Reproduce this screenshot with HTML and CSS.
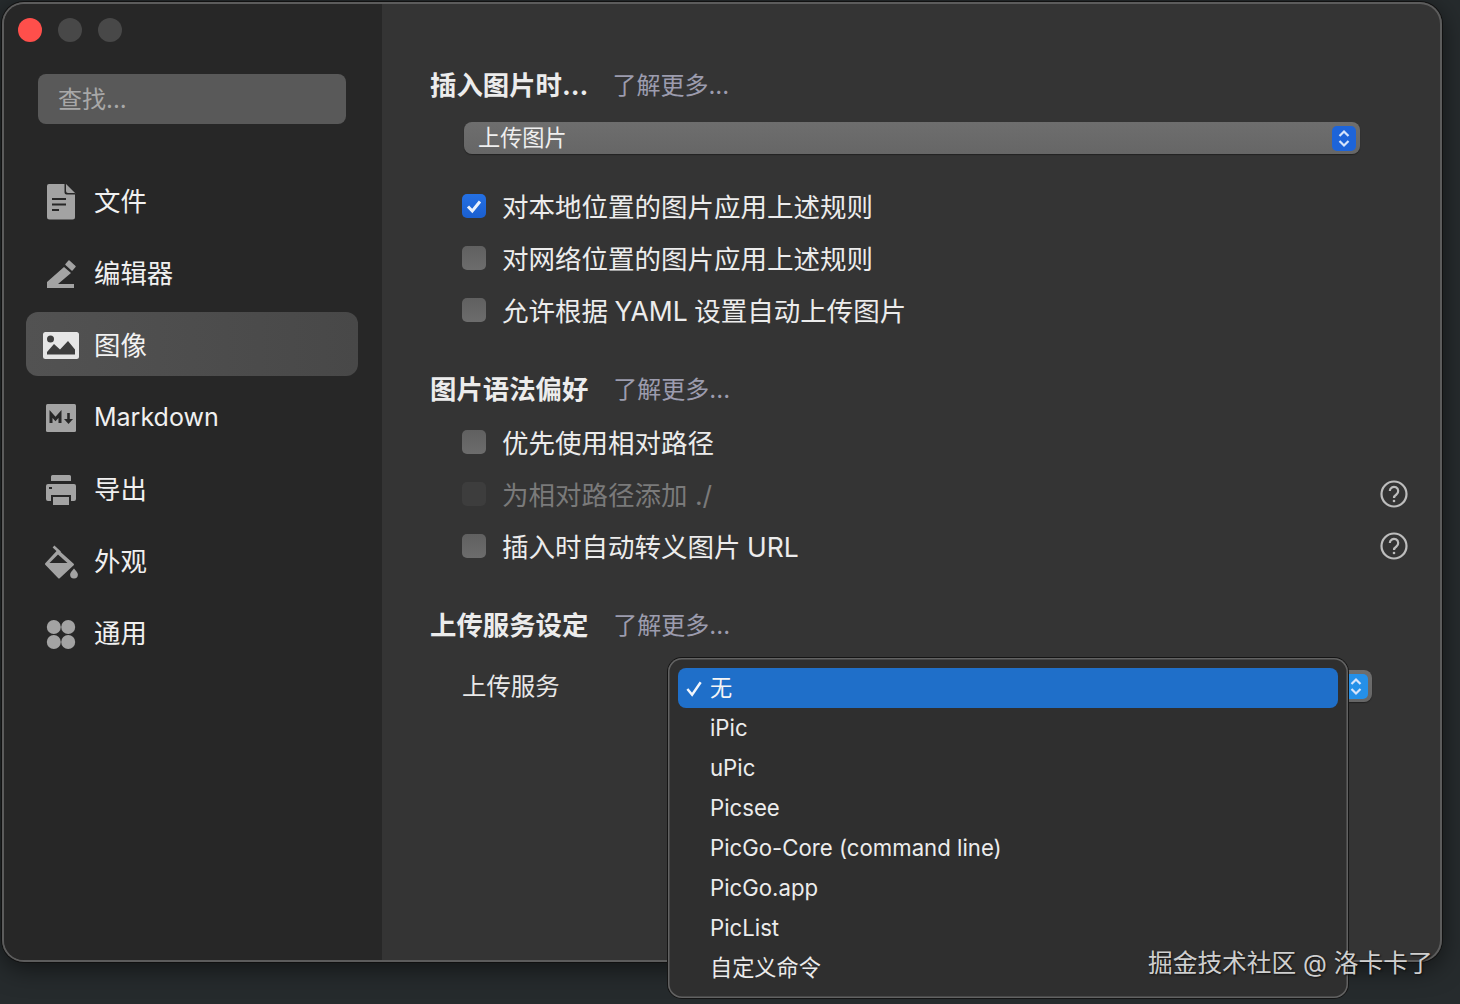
FILE: index.html
```html
<!DOCTYPE html>
<html lang="zh-CN">
<head>
<meta charset="utf-8">
<title>偏好设置</title>
<link rel="stylesheet" href="styles.css">
</head>
<body>
<div class="window">
  <aside class="sidebar">
    <div class="traffic">
      <span class="dot dot-red"></span>
      <span class="dot"></span>
      <span class="dot"></span>
    </div>
    <div class="search">查找...</div>
    <nav class="nav">
      <div class="nav-item">
        <svg class="nav-icon" viewBox="0 0 36 36"><path fill="#a3a3a3" d="M6 1h16.500L32 10.500V34a2.500 2.500 0 0 1-2.500 2.500h-23A2.500 2.500 0 0 1 4 34V3a2 2 0 0 1 2-2z"/><path fill="#272727" d="M21.500 1h1.200L32 10.300v1.200h-8.500a2 2 0 0 1-2-2z"/><path fill="#a3a3a3" d="M23 1l9 9h-7a2 2 0 0 1-2-2z"/><path stroke="#272727" stroke-width="2" d="M9 16h14M9 21.500h14M9 27h7"/></svg>
        <span class="nav-label">文件</span>
      </div>
      <div class="nav-item">
        <svg class="nav-icon" viewBox="0 0 36 36"><path fill="#a3a3a3" d="M4 27L21 12l7 6-13 11h16v4H4z"/><path fill="#a3a3a3" stroke="#a3a3a3" stroke-width="1.500" stroke-linejoin="round" d="M23 9.500l3-3.500 6 5.500-3 3.500z"/></svg>
        <span class="nav-label">编辑器</span>
      </div>
      <div class="nav-item nav-item-active">
        <svg class="nav-icon" viewBox="0 0 36 36"><rect x="0" y="5" width="36" height="27" rx="2.500" fill="#e6e6e6"/><circle cx="7.500" cy="12" r="3.500" fill="#3e3e3e"/><path fill="#3e3e3e" d="M4 27.500v-2.500l7-8 6 5.500 8-8.500 7 8.500v5z"/></svg>
        <span class="nav-label">图像</span>
      </div>
      <div class="nav-item">
        <svg class="nav-icon" viewBox="0 0 36 36"><rect x="3" y="5" width="30" height="28" rx="1.500" fill="#a3a3a3"/><path stroke="#272727" stroke-width="3" fill="none" d="M8 24v-9l4.500 5 4.500-5v9"/><path stroke="#272727" stroke-width="2.600" fill="none" d="M25.500 14v8"/><path fill="#272727" d="M21 20h9l-4.500 5z"/></svg>
        <span class="nav-label-latin">Markdown</span>
      </div>
      <div class="nav-item">
        <svg class="nav-icon" viewBox="0 0 36 36"><path fill="#a3a3a3" d="M8 5.500a1.500 1.500 0 0 1 1.500-1.500h17A1.500 1.500 0 0 1 28 5.500V10H8zM5 13h26a2 2 0 0 1 2 2v13a2 2 0 0 1-2 2h-3v-6H8v6H5a2 2 0 0 1-2-2V15a2 2 0 0 1 2-2zM10 26h16v8H10z"/><rect x="6" y="16" width="3" height="2" fill="#272727"/></svg>
        <span class="nav-label">导出</span>
      </div>
      <div class="nav-item">
        <svg class="nav-icon" viewBox="0 0 36 36"><path fill="#a3a3a3" stroke="#a3a3a3" stroke-width="2" stroke-linejoin="round" d="M15 8l15 13.500L16 34.500 3 21z"/><path fill="#272727" d="M15 11.500L6.500 20h18z"/><path stroke="#a3a3a3" stroke-width="2.600" d="M10.500 3.500L17 9.500"/><path fill="#a3a3a3" d="M31 25.500c1.500 2.200 3.900 3.700 3.900 6a3.900 3.900 0 0 1-7.800 0c0-2.300 2.400-3.800 3.900-6z"/></svg>
        <span class="nav-label">外观</span>
      </div>
      <div class="nav-item">
        <svg class="nav-icon" viewBox="0 0 36 36"><circle cx="10.800" cy="12" r="7" fill="#a3a3a3"/><circle cx="25.200" cy="12" r="7" fill="#a3a3a3"/><circle cx="10.800" cy="27" r="7" fill="#a3a3a3"/><circle cx="25.200" cy="27" r="7" fill="#a3a3a3"/></svg>
        <span class="nav-label">通用</span>
      </div>
    </nav>
  </aside>

  <main class="content">
    <section class="group">
      <div class="group-head"><strong class="group-title">插入图片时...</strong><span class="group-link group-link-a">了解更多...</span></div>
      <div class="select select-wide">
        <span class="select-text">上传图片</span>
        <span class="stepper"><svg viewBox="0 0 24 25"><path d="M7.500 10L12 5.500 16.500 10M7.500 15L12 19.500 16.500 15"/></svg></span>
      </div>
      <div class="option-list option-list-first">
        <label class="option"><span class="box box-on"><svg viewBox="0 0 24 24"><path d="M6 12.500l4.300 4.500L18 7.500"/></svg></span><span class="option-text">对本地位置的图片应用上述规则</span></label>
        <label class="option"><span class="box"></span><span class="option-text">对网络位置的图片应用上述规则</span></label>
        <label class="option"><span class="box"></span><span class="option-text option-text-tight">允许根据 YAML 设置自动上传图片</span></label>
      </div>
    </section>

    <section class="group">
      <div class="group-head"><strong class="group-title">图片语法偏好</strong><span class="group-link">了解更多...</span></div>
      <div class="option-list">
        <label class="option"><span class="box"></span><span class="option-text">优先使用相对路径</span></label>
        <label class="option option-off"><span class="box box-off"></span><span class="option-text">为相对路径添加 ./</span><span class="help"><svg viewBox="0 0 28 28"><circle cx="14" cy="14" r="12.500"/><path d="M9.800 11a4.200 4.200 0 1 1 6.600 3.500c-1.500 1-2.400 1.800-2.400 3.500"/><circle class="help-dot" cx="14" cy="21" r="1.300"/></svg></span></label>
        <label class="option"><span class="box"></span><span class="option-text option-text-tight">插入时自动转义图片 URL</span><span class="help"><svg viewBox="0 0 28 28"><circle cx="14" cy="14" r="12.500"/><path d="M9.800 11a4.200 4.200 0 1 1 6.600 3.500c-1.500 1-2.400 1.800-2.400 3.500"/><circle class="help-dot" cx="14" cy="21" r="1.300"/></svg></span></label>
      </div>
    </section>

    <section class="group">
      <div class="group-head"><strong class="group-title">上传服务设定</strong><span class="group-link">了解更多...</span></div>
      <div class="service-row">
        <span class="service-label">上传服务</span>
        <div class="select select-service">
          <span class="stepper stepper-bright"><svg viewBox="0 0 24 25"><path d="M7.500 10L12 5.500 16.500 10M7.500 15L12 19.500 16.500 15"/></svg></span>
        </div>
      </div>
    </section>
  </main>
</div>

<div class="popup">
  <div class="popup-item popup-item-on"><svg class="popup-check" viewBox="0 0 20 20"><path d="M2.500 10.500l5 6L16.500 3.500"/></svg>无</div>
  <div class="popup-item">iPic</div>
  <div class="popup-item">uPic</div>
  <div class="popup-item">Picsee</div>
  <div class="popup-item">PicGo-Core (command line)</div>
  <div class="popup-item">PicGo.app</div>
  <div class="popup-item">PicList</div>
  <div class="popup-item">自定义命令</div>
</div>

<div class="watermark">掘金技术社区 @ 洛卡卡了</div>
</body>
</html>
```

FILE: styles.css
```css
* { box-sizing: border-box; }

html, body { height: 100%; }

body {
  margin: 0;
  padding: 2px 18px 0 2px;
  overflow: hidden;
  background: #262b2d;
  font-family: "Inter", "Noto Sans CJK SC", sans-serif;
  color: #e8e8e8;
}

.window {
  display: flex;
  width: 1440px;
  height: 960px;
  border-radius: 22px;
  overflow: hidden;
  box-shadow: inset 0 0 0 2px #5c5c5c, 0 0 0 1px #111, 0 6px 26px rgba(0, 0, 0, .55);
  background: #343434;
}

.sidebar {
  flex: 0 0 378px;
  margin: 2px 0 2px 2px;
  border-radius: 20px 0 0 20px;
  background: #272727;
  padding: 0 22px;
}

.traffic {
  display: flex;
  gap: 16px;
  height: 70px;
  margin-left: -8px;
  padding-top: 14px;
}

.dot {
  width: 24px;
  height: 24px;
  border-radius: 50%;
  background: #484848;
}

.dot-red { background: #ff4f4b; }

.search {
  width: 308px;
  height: 50px;
  margin-left: 12px;
  padding-left: 20px;
  border-radius: 8px;
  background: #595959;
  color: #a8a8a8;
  font-size: 24px;
  line-height: 52px;
}

.nav {
  display: flex;
  flex-direction: column;
  gap: 8px;
  margin-top: 44px;
}

.nav-item {
  display: flex;
  align-items: center;
  gap: 15px;
  width: 332px;
  height: 64px;
  padding-left: 17px;
  border-radius: 12px;
  font-size: 26.400px;
  color: #f0f0f0;
}

.nav-item-active {
  background: linear-gradient(90deg, #525252, #484848);
  color: #f2f2f2;
}

.nav-icon {
  flex: none;
  width: 36px;
  height: 36px;
  margin-top: 2px;
  overflow: visible;
}

.nav-label { margin-bottom: 2px; }

.nav-label-latin {
  margin-top: 2px;
  font-size: 25px;
}

.content {
  flex: 1;
  padding: 63px 34px 0 48px;
}

.group { margin-bottom: 32px; }

.group-head {
  display: flex;
  align-items: center;
  height: 40px;
  font-size: 26.400px;
}

.group-title {
  margin-bottom: 4px;
  font-weight: 700;
  color: #ececec;
}

.group-link {
  margin: 0 0 4px 25px;
  font-size: 24px;
  font-weight: 400;
  color: #9c9cae;
}

.group-link-a { margin-left: 24px; }

.select {
  display: flex;
  align-items: center;
  justify-content: space-between;
  height: 32px;
  border-radius: 8px;
  background: linear-gradient(180deg, #6e6e6e, #666);
  font-size: 22.200px;
  color: #efefef;
  box-shadow: 0 1px 1px #222;
}

.select-wide {
  width: 896px;
  margin: 17px 0 0 34px;
  padding: 0 4px 0 14px;
}

.select-text { margin-bottom: 4px; }

.stepper {
  display: flex;
  width: 24px;
  height: 25px;
  border-radius: 5px;
  background: #1d64d9;
}

.stepper svg {
  width: 100%;
  height: 100%;
  fill: none;
  stroke: #d6e4fb;
  stroke-width: 2.200;
}

.stepper-bright { background: #2590e8; }

.option-list { margin-top: 8px; }
.option-list-first.option-list { margin-top: 27px; }

.option {
  display: flex;
  align-items: center;
  height: 52px;
  margin-left: 32px;
  padding-bottom: 2px;
  gap: 16px;
  font-size: 26.500px;
  color: #ececec;
}

.option-text { margin-bottom: 2px; }

.option-text-tight { word-spacing: -1px; }

.option-off { color: #7a7a7a; }

.box {
  flex: none;
  width: 24px;
  height: 24px;
  border-radius: 5px;
  background: linear-gradient(180deg, #606060, #6c6c6c);
}

.box-on {
  background: linear-gradient(180deg, #2470e4, #1a5fd0);
}

.box-on svg {
  display: block;
  fill: none;
  stroke: #e9f1fd;
  stroke-width: 3;
}

.box-off { background: #3d3d3d; }

.help {
  display: block;
  width: 28px;
  height: 28px;
  margin-left: auto;
}

.help svg {
  display: block;
  fill: none;
  stroke: #bdbdbd;
  stroke-width: 2.200;
}

.help svg .help-dot {
  fill: #bdbdbd;
  stroke: none;
}

.service-row {
  display: flex;
  align-items: center;
  height: 52px;
  margin: 15px 0 0 32px;
}

.service-label {
  margin-bottom: 4px;
  font-size: 24.400px;
  color: #e8e8e8;
}

.select-service {
  width: 697px;
  margin-left: 115px;
  padding: 0 4px 0 0;
  justify-content: flex-end;
}

.popup {
  position: absolute;
  left: 668px;
  top: 658px;
  width: 680px;
  height: 340px;
  padding: 10px;
  border-radius: 14px;
  background: #2f2f2f;
  box-shadow: inset 0 0 0 1.500px #626262, 0 0 0 1px #151515;
}

.popup-item {
  position: relative;
  height: 40px;
  padding-left: 32px;
  border-radius: 8px;
  font-size: 22.200px;
  line-height: 40px;
  color: #ececec;
}

.popup-item-on {
  background: #1f6fc9;
  color: #f6f6f6;
}

.popup-check {
  position: absolute;
  left: 7px;
  top: 11px;
  width: 19px;
  height: 19px;
  fill: none;
  stroke: #f2f6fc;
  stroke-width: 2.600;
}

.watermark {
  position: absolute;
  left: 1148px;
  top: 944px;
  font-size: 24.700px;
  line-height: 38px;
  color: #cfcfcf;
  text-shadow: 1px 1px 2px #111;
  white-space: nowrap;
}
```
